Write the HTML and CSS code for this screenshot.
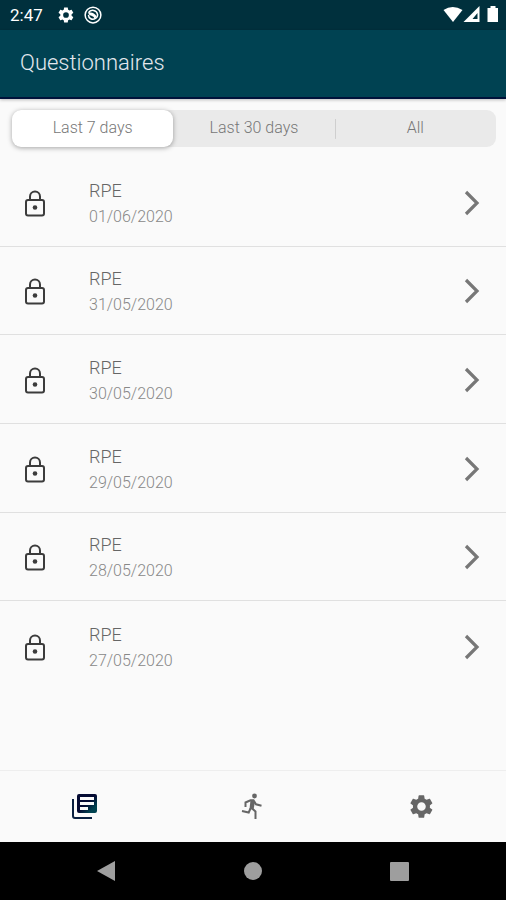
FILE: index.html
```html
<!DOCTYPE html>
<html lang="en">
<head>
  <meta charset="UTF-8" />
  <meta name="viewport" content="width=device-width, initial-scale=1.0"/>
  <title>Questionnaires</title>
  <link rel="stylesheet" href="styles.css">
</head>
<body>
  <!-- Shared icons -->
  <svg class="sprite" aria-hidden="true">
    <symbol id="gear" viewBox="0 0 24 24">
      <path fill-rule="evenodd" d="M19.4 13c.1-.3.1-.7.1-1s0-.7-.1-1l2.1-1.6c.2-.2.2-.4.1-.6l-2-3.500c-.1-.2-.4-.3-.6-.2l-2.500 1c-.5-.4-1.100-.7-1.700-1l-.4-2.600c0-.3-.2-.5-.5-.5h-4c-.2 0-.4.2-.5.5L9 5.100c-.6.3-1.200.6-1.700 1l-2.500-1c-.2-.1-.5 0-.6.2l-2 3.500c-.1.2-.1.400.1.600L4.500 11c0 .3-.1.700-.1 1s0 .7.1 1l-2.200 1.600c-.2.2-.2.400-.1.600l2 3.500c.1.200.4.300.6.200l2.500-1c.5.400 1.100.7 1.700 1l.4 2.600c.1.300.3.500.5.500h4c.3 0 .5-.2.500-.5l.4-2.600c.6-.3 1.200-.6 1.700-1l2.500 1c.2.100.5 0 .6-.2l2-3.500c.1-.2.1-.4-.1-.6zM12 15.800a3.800 3.800 0 1 1 0-7.600 3.800 3.800 0 0 1 0 7.600z"/>
    </symbol>
    <symbol id="lock" viewBox="0 0 30 30">
      <path d="M10 12V8.500a5 5 0 0 1 10 0V12" fill="none" stroke="currentColor" stroke-width="2"/>
      <rect x="6" y="12" width="18" height="15.500" rx="2" fill="none" stroke="currentColor" stroke-width="2"/>
      <circle cx="15" cy="19.500" r="2.300"/>
    </symbol>
    <symbol id="chevron" viewBox="0 0 28 28">
      <path d="M8 3 19 14 8 25" fill="none" stroke="currentColor" stroke-width="3.200"/>
    </symbol>
  </svg>

  <div class="status-bar">
    <span class="time">2:47</span>
    <svg class="status-icon"><use href="#gear"/></svg>
    <svg class="status-icon" viewBox="0 0 24 24">
      <circle cx="12" cy="12" r="10.500" fill="none" stroke="#fff" stroke-width="2"/>
      <path d="M6 9c3-5 11-4 12 2 1 5-5 8-9 6-2-1-3-3-3-5" fill="none" stroke="#fff" stroke-width="2"/>
      <path d="M6 9c4-1 8 0 11 5l-3 3c-1-4-4-3-8-6z"/>
    </svg>
    <svg class="signals" viewBox="0 0 54 20">
      <path d="M0 5Q9-1 19 5L9.500 17z"/>
      <path fill-rule="evenodd" d="M20 17 36 1v16zM29 14h5V8z"/>
      <path d="M44 3h3V1h5v2h3v14H44z"/>
    </svg>
  </div>

  <header class="header">
    <h1>Questionnaires</h1>
  </header>

  <main class="main">
    <div class="segments">
      <button class="segment active">Last 7 days</button>
      <button class="segment">Last 30 days</button>
      <button class="segment">All</button>
    </div>

    <ul class="list">
      <li><a class="row" href="#">
        <svg class="lock"><use href="#lock"/></svg>
        <div class="info"><h2>RPE</h2><p>01/06/2020</p></div>
        <svg class="chevron"><use href="#chevron"/></svg>
      </a></li>
      <li><a class="row" href="#">
        <svg class="lock"><use href="#lock"/></svg>
        <div class="info"><h2>RPE</h2><p>31/05/2020</p></div>
        <svg class="chevron"><use href="#chevron"/></svg>
      </a></li>
      <li><a class="row" href="#">
        <svg class="lock"><use href="#lock"/></svg>
        <div class="info"><h2>RPE</h2><p>30/05/2020</p></div>
        <svg class="chevron"><use href="#chevron"/></svg>
      </a></li>
      <li><a class="row" href="#">
        <svg class="lock"><use href="#lock"/></svg>
        <div class="info"><h2>RPE</h2><p>29/05/2020</p></div>
        <svg class="chevron"><use href="#chevron"/></svg>
      </a></li>
      <li><a class="row" href="#">
        <svg class="lock"><use href="#lock"/></svg>
        <div class="info"><h2>RPE</h2><p>28/05/2020</p></div>
        <svg class="chevron"><use href="#chevron"/></svg>
      </a></li>
      <li><a class="row" href="#">
        <svg class="lock"><use href="#lock"/></svg>
        <div class="info"><h2>RPE</h2><p>27/05/2020</p></div>
        <svg class="chevron"><use href="#chevron"/></svg>
      </a></li>
    </ul>
  </main>

  <nav class="tabs">
    <a class="tab active" href="#" aria-label="Questionnaires">
      <svg viewBox="0 0 27 27">
        <defs>
          <linearGradient id="ink" x1="0" y1="0" x2="1" y2="1">
            <stop offset="0.500" stop-color="#050b33"/>
            <stop offset="0.800" stop-color="#004250"/>
          </linearGradient>
        </defs>
        <path d="M2 6v17a2 2 0 0 0 2 2h17" fill="none" stroke="#0a2040" stroke-width="2"/>
        <path fill="url(#ink)" fill-rule="evenodd" d="M8 1h16a2 2 0 0 1 2 2v15a2 2 0 0 1-2 2H8a2 2 0 0 1-2-2V3a2 2 0 0 1 2-2zM9 4v3h14V4zM9 9v3h14V9zM9 14v3h8v-3z"/>
      </svg>
    </a>
    <a class="tab" href="#" aria-label="Activity">
      <svg viewBox="2 3 27 27">
        <circle cx="17.500" cy="6" r="2.400"/>
        <g fill="none" stroke="currentColor" stroke-width="2">
          <path d="M8.500 17v-4.500l5-2.200h3l2.500 4 5.500 1.500"/>
          <path d="M13.500 18.500l-1.800 4-6.700-1.500"/>
          <path d="M14.500 18l4 3.500V29"/>
        </g>
        <path d="M13.500 10h3l1.500 2-1.500 7.500-4-.5z"/>
      </svg>
    </a>
    <a class="tab" href="#" aria-label="Settings">
      <svg class="settings"><use href="#gear"/></svg>
    </a>
  </nav>

  <div class="system-nav">
    <button aria-label="Back"><svg viewBox="0 0 20 20"><path d="M1 10 19 0v20z"/></svg></button>
    <button aria-label="Home"><svg viewBox="0 0 20 20"><circle cx="10" cy="10" r="9"/></svg></button>
    <button aria-label="Recent apps"><svg viewBox="0 0 20 20"><rect x="0" y="1" width="19" height="19" rx="1"/></svg></button>
  </div>
</body>
</html>
```
FILE: styles.css
```css
* {
  margin: 0;
  padding: 0;
  box-sizing: border-box;
  font-family: Roboto, sans-serif;
}

body {
  display: flex;
  flex-direction: column;
  min-height: 100vh;
  background-color: #fafafa;
}

svg {
  display: block;
  flex: none;
  fill: currentColor;
}

button {
  border: none;
  background: none;
  cursor: pointer;
}

.sprite {
  position: absolute;
  width: 0;
  height: 0;
}

.status-bar {
  display: flex;
  align-items: center;
  gap: 9px;
  height: 30px;
  padding: 0 8px 0 10px;
  background-color: #00303d;
  color: #fff;
}

.time {
  margin-right: 5px;
  font-size: 17px;
  line-height: 30px;
}

.status-icon {
  width: 18px;
  height: 18px;
}

.signals {
  width: 55px;
  height: 20px;
  margin-left: auto;
}

.header {
  padding: 18px 20px 19px;
  background-color: #004252;
  border-bottom: 2px solid #00123a;
  box-shadow: 0 1px 3px rgba(0, 0, 0, 0.25);
  color: #e4e8ee;
}

.header h1 {
  font-size: 22px;
  font-weight: 300;
  line-height: 30px;
}

.main {
  flex: 1;
  display: flex;
  flex-direction: column;
  padding-top: 11px;
}

.segments {
  display: grid;
  grid-template-columns: repeat(3, 1fr);
  margin: 0 10px 11px 12px;
  border-radius: 9px;
  background-color: #eaeaea;
}

.segment {
  padding: 9px 0 10px;
  border-radius: 9px;
  color: #777;
  font-size: 16px;
  font-weight: 300;
  line-height: 18px;
}

.segment.active {
  background-color: #fff;
  box-shadow: 0 1px 5px rgba(0, 0, 0, 0.35);
}

.segment:last-child {
  background: linear-gradient(#cfcfcf, #cfcfcf) left center / 1px 20px no-repeat;
}

.list {
  flex: 1;
  display: grid;
  grid-auto-rows: 1fr;
  padding-bottom: 80px;
  list-style: none;
}

.list li {
  display: grid;
  border-bottom: 1px solid #e0e0e0;
}

.list li:last-child {
  border-bottom: none;
}

.row {
  display: flex;
  align-items: center;
  padding: 2px 20px 0;
  color: #3c3c3c;
  text-decoration: none;
}

.lock {
  width: 30px;
  height: 30px;
}

.info {
  flex: 1;
  padding-top: 2px;
  margin-left: 39px;
}

.info h2 {
  color: #666;
  font-size: 18px;
  font-weight: 300;
  line-height: 26px;
}

.info p {
  color: #888;
  font-size: 16px;
  font-weight: 300;
  line-height: 26px;
}

.chevron {
  width: 28px;
  height: 28px;
  color: #777;
}

.tabs {
  display: grid;
  grid-template-columns: repeat(3, 1fr);
  border-top: 1px solid #eee;
}

.tab {
  display: flex;
  justify-content: center;
  padding: 22px 0;
  color: #666;
}

.tab svg {
  width: 27px;
  height: 27px;
}

.system-nav {
  display: grid;
  grid-template-columns: repeat(3, 1fr);
  padding: 0 32px;
  background-color: #000;
  color: #9e9e9e;
}

.system-nav button {
  display: flex;
  justify-content: center;
  padding: 19px 0;
  color: inherit;
}

.system-nav svg {
  width: 20px;
  height: 20px;
}
```
